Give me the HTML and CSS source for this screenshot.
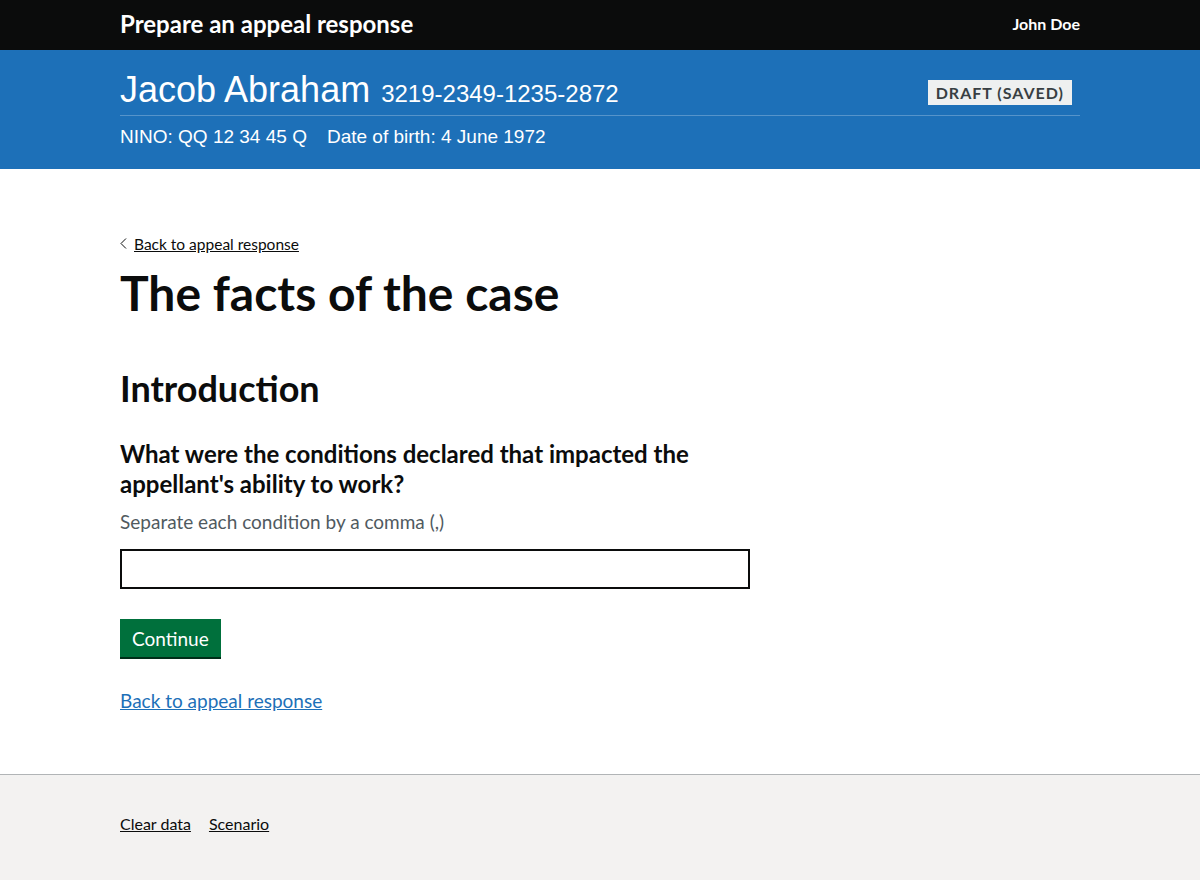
FILE: index.html
```html
<!DOCTYPE html>
<html lang="en">
<head>
<meta charset="utf-8">
<title>The facts of the case</title>
<link rel="stylesheet" href="styles.css">
</head>
<body>
<header class="top">
  <div class="container top-inner">
    <span class="service">Prepare an appeal response</span>
    <span class="user">John Doe</span>
  </div>
</header>
<section class="banner">
  <div class="container">
    <div class="banner-row">
      <div class="person"><span class="name">Jacob Abraham</span><span class="ref">3219-2349-1235-2872</span></div>
      <span class="tag">Draft (saved)</span>
    </div>
    <div class="banner-meta">
      <span>NINO: QQ 12 34 45 Q</span>
      <span>Date of birth: 4 June 1972</span>
    </div>
  </div>
</section>
<main class="container main">
  <a class="back" href="#"><svg class="chev" width="7" height="11" viewBox="0 0 7 11"><path d="M6 0.5 L1 5.5 L6 10.5" fill="none" stroke="#0b0c0c" stroke-width="1"/></svg>Back to appeal response</a>
  <h1 class="h1">The facts of the case</h1>
  <h2 class="h2">Introduction</h2>
  <div class="form">
    <label class="label" for="c">What were the conditions declared that impacted the appellant's ability to work?</label>
    <div class="hint">Separate each condition by a comma (,)</div>
    <input class="input" id="c" type="text">
    <button class="button" type="button">Continue</button>
    <a class="link" href="#">Back to appeal response</a>
  </div>
</main>
<footer class="footer">
  <div class="container footer-links">
    <a href="#">Clear data</a>
    <a href="#">Scenario</a>
  </div>
</footer>
</body>
</html>
```
FILE: styles.css
```css
* { box-sizing: border-box; }
html, body { margin: 0; padding: 0; }
body {
  font-family: Lato, "Noto Sans", Arial, sans-serif;
  color: #0b0c0c;
  background: #fff;
}
.container { width: 960px; margin: 0 auto; }

.top { background: #0b0c0c; color: #fff; height: 50px; }
.top-inner { display: flex; justify-content: space-between; align-items: center; height: 50px; padding-bottom: 3px; }
.service { font-size: 24px; font-weight: 700; }
.user { font-size: 16px; font-weight: 700; }

.banner { background: #1d70b8; color: #fff; height: 119px; padding-top: 20px; }
.banner-row { display: flex; justify-content: space-between; align-items: flex-start; border-bottom: 1px solid #5694ca; height: 46px; }
.person { font-family: "Liberation Sans", Arial, sans-serif; display: flex; align-items: baseline; }
.name { font-size: 36px; line-height: 40px; }
.ref { font-size: 24px; line-height: 28px; margin-left: 11px; }
.tag {
  margin-top: 10px; margin-right: 8px;
  background: #eef0f0; color: #383f43;
  text-transform: uppercase; font-weight: 700; font-size: 16px; letter-spacing: 1px;
  padding: 3px 8px 3px 8px; line-height: 19px;
}
.banner-meta { font-family: "Liberation Sans", Arial, sans-serif; font-size: 19px; display: flex; gap: 20px; padding-top: 10px; }

.main { padding-top: 64px; padding-bottom: 62px; }
.back { display: inline-flex; align-items: center; gap: 7px; font-size: 15.5px; color: #0b0c0c; text-decoration: underline; }
.h1 { font-size: 48px; line-height: 50px; font-weight: 700; margin: 15px 0 50px; }
.h2 { font-size: 36px; line-height: 40px; font-weight: 700; margin: 0 0 31px; }
.form { width: 640px; }
.label { display: block; font-size: 24px; line-height: 30px; font-weight: 700; margin-bottom: 10px; }
.hint { font-size: 19px; line-height: 25px; color: #505a5f; margin-bottom: 15px; }
.input { display: block; width: 630px; height: 40px; border: 2px solid #0b0c0c; border-radius: 0; margin: 0 0 30px; font-size: 19px; padding: 5px; }
.button {
  display: block; background: #00703c; color: #fff; border: 0; border-radius: 0;
  box-shadow: 0 2px 0 #002d18; font-family: inherit; font-size: 19px; line-height: 19px;
  padding: 10px 12px 9px; margin-bottom: 32px; cursor: pointer;
}
.link { font-size: 19px; color: #1d70b8; text-decoration: underline; }

.footer { background: #f3f2f1; border-top: 1px solid #b1b4b6; height: 106px; }
.footer-links { display: flex; gap: 18px; padding-top: 39px; }
.footer-links a { font-size: 16px; color: #0b0c0c; text-decoration: underline; }
```
